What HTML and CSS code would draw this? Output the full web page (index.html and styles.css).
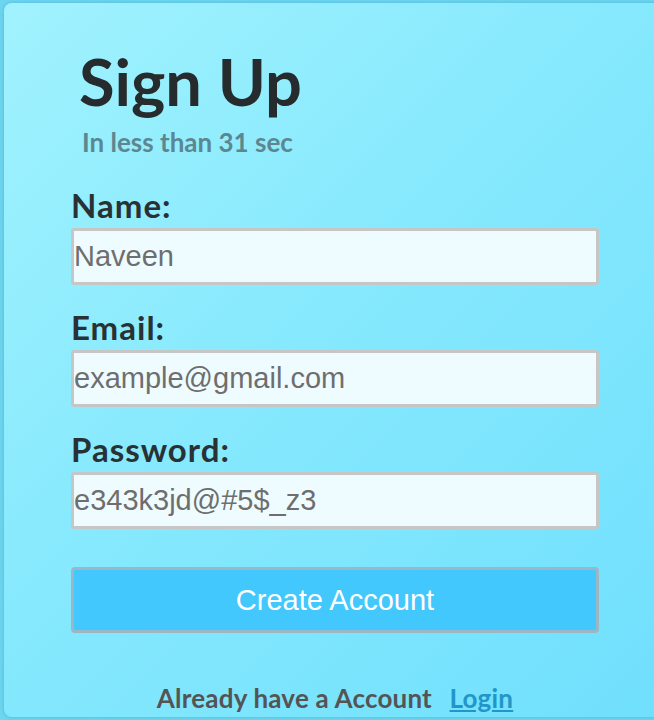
FILE: index.html
```html
<!DOCTYPE html>
<html>
<head>
<meta charset="utf-8">
<link rel="stylesheet" href="styles.css">
</head>
<body>
<div class="card">
  <div class="header">
    <h1 class="title">Sign Up</h1>
    <p class="subtitle">In less than 31 sec</p>
  </div>
  <form class="form">
    <div class="field">
      <label class="label">Name:</label>
      <input class="input" type="text" value="Naveen">
    </div>
    <div class="field">
      <label class="label">Email:</label>
      <input class="input" type="text" value="example@gmail.com">
    </div>
    <div class="field">
      <label class="label">Password:</label>
      <input class="input" type="text" value="e343k3jd@#5$_z3">
    </div>
    <button class="btn" type="button">Create Account</button>
    <p class="footer">Already have a Account <a class="login" href="#">Login</a></p>
  </form>
</div>
</body>
</html>
```
FILE: styles.css
```css
html, body {
  margin: 0;
  padding: 0;
  height: 100%;
  overflow: hidden;
}
body {
  background: #6ed6f0;
  font-family: Lato, "Noto Sans", sans-serif;
}
.card {
  margin: 3px 0 0 4px;
  width: 700px;
  height: 714px;
  box-sizing: border-box;
  border-radius: 8px;
  background: linear-gradient(135deg, #a1f2fe 0%, #86e9fd 45%, #6fdffd 100%);
  box-shadow: 0 0 4px rgba(40, 150, 190, 0.45);
  padding: 46px 0 0 67px;
}
.header {
  padding-left: 8px;
}
.title {
  margin: 0;
  font-size: 65px;
  line-height: 1;
  font-weight: 700;
  color: #262b2d;
}
.subtitle {
  margin: 15px 0 0 3px;
  font-size: 26px;
  line-height: 1;
  font-weight: 700;
  color: #5d8790;
}
.form {
  width: 528px;
  display: flex;
  flex-direction: column;
  margin-top: 34px;
}
.field {
  display: flex;
  flex-direction: column;
  margin-bottom: 26px;
}
.label {
  font-size: 33px;
  line-height: 1;
  font-weight: 700;
  letter-spacing: 1px;
  color: #283134;
  margin-bottom: 6px;
}
.input {
  box-sizing: border-box;
  height: 57px;
  width: 100%;
  border: 3px solid #c6c6c6;
  border-radius: 3px;
  background: #effcff;
  font-family: "Liberation Sans", Arial, sans-serif;
  font-size: 29px;
  color: #6e6e6e;
  padding: 0;
  outline: none;
}
.btn {
  box-sizing: border-box;
  margin-top: 12px;
  height: 66px;
  width: 100%;
  border: 3px solid #9ab7c5;
  border-radius: 4px;
  background: #42c8fd;
  color: #ffffff;
  font-family: "Liberation Sans", Arial, sans-serif;
  font-size: 29px;
  cursor: pointer;
}
.footer {
  margin: 52px 0 0 0;
  text-align: center;
  font-size: 26px;
  line-height: 1;
  font-weight: 700;
  letter-spacing: 0.2px;
  color: #555454;
}
.login {
  margin-left: 11px;
  color: #2196c8;
  text-decoration: underline;
}
```
